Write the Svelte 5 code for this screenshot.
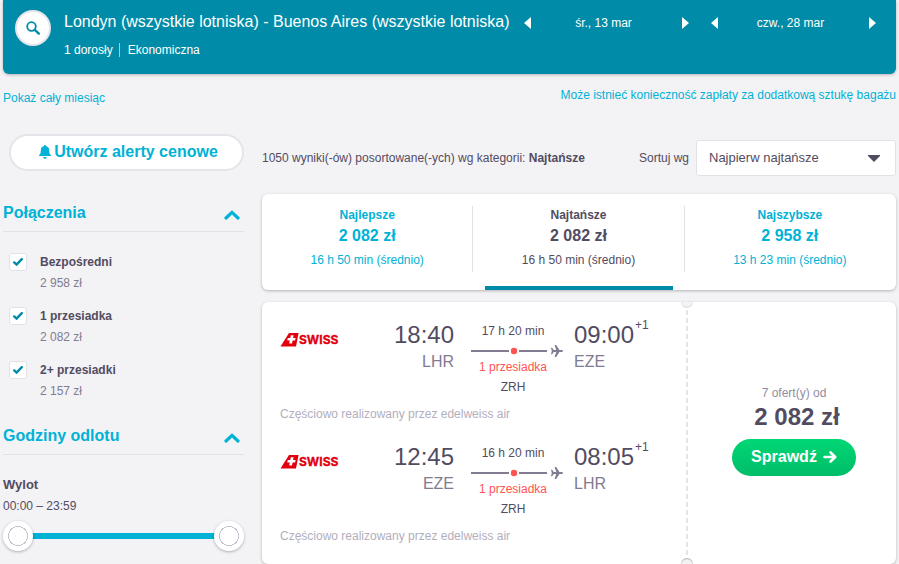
<script>
    const stops = $state([
        { id: "direct", label: "Bezpośredni", price: "2 958 zł", checked: true },
        { id: "one", label: "1 przesiadka", price: "2 082 zł", checked: true },
        { id: "more", label: "2+ przesiadki", price: "2 157 zł", checked: true },
    ]);

    const tabs = [
        { id: "best", label: "Najlepsze", price: "2 082 zł", time: "16 h 50 min (średnio)" },
        { id: "cheap", label: "Najtańsze", price: "2 082 zł", time: "16 h 50 min (średnio)" },
        { id: "fast", label: "Najszybsze", price: "2 958 zł", time: "13 h 23 min (średnio)" },
    ];
    let activeTab = $state("cheap");

    const dates = ["śr., 13 mar", "czw., 28 mar"];

    const legs = [
        { from: "LHR", to: "EZE", departs: "18:40", arrives: "09:00", duration: "17 h 20 min", via: "ZRH" },
        { from: "EZE", to: "LHR", departs: "12:45", arrives: "08:05", duration: "16 h 20 min", via: "ZRH" },
    ];

    // departure window, minutes after midnight
    const DAY = 1439;
    let start = $state(0);
    let end = $state(DAY);

    function clock(minutes) {
        const h = String(Math.floor(minutes / 60)).padStart(2, "0");
        const m = String(minutes % 60).padStart(2, "0");
        return `${h}:${m}`;
    }
</script>

{#snippet sectionTitle(text)}
    <h2 class="section-title">
        <button type="button">
            {text}
            <svg width="16" height="10" viewBox="0 0 16 10" aria-hidden="true">
                <path d="M2 8 L8 2.4 L14 8" fill="none" stroke="currentColor" stroke-width="3.2" stroke-linecap="round" />
            </svg>
        </button>
    </h2>
{/snippet}

<div class="page">
    <header class="search-bar">
        <button class="search-btn" type="button" aria-label="Szukaj">
            <svg width="14" height="14" viewBox="0 0 14 14" aria-hidden="true">
                <circle cx="5.5" cy="5.5" r="4.3" fill="none" stroke="currentColor" stroke-width="1.8" />
                <path d="M8.8 8.8 L12.8 12.6" stroke="currentColor" stroke-width="2.4" stroke-linecap="round" />
            </svg>
        </button>
        <div class="trip">
            <h1>Londyn (wszystkie lotniska) - Buenos Aires (wszystkie lotniska)</h1>
            <p><span>1 dorosły</span><span>Ekonomiczna</span></p>
        </div>
        <div class="dates">
            {#each dates as date}
                <div class="date">
                    <button type="button" aria-label="Poprzedni dzień">
                        <svg width="7" height="12" viewBox="0 0 7 12"><path d="M7 0 V12 L0 6 Z" fill="currentColor" /></svg>
                    </button>
                    <span>{date}</span>
                    <button type="button" aria-label="Następny dzień">
                        <svg width="7" height="12" viewBox="0 0 7 12"><path d="M0 0 V12 L7 6 Z" fill="currentColor" /></svg>
                    </button>
                </div>
            {/each}
        </div>
    </header>

    <div class="columns">
        <aside>
            <a class="month-link" href="#month">Pokaż cały miesiąc</a>
            <button class="alert-btn" type="button">
                <svg width="12" height="14" viewBox="0 0 12 14" aria-hidden="true">
                    <path
                        d="M6 0 C6.6 0 7 .4 7 1 C9.2 1.6 10.2 3.2 10.2 5.4 C10.2 8 10.7 9.4 12 10.3 V11 H0 V10.3 C1.3 9.4 1.8 8 1.8 5.4 C1.8 3.2 2.8 1.6 5 1 C5 .4 5.4 0 6 0 Z M4.2 12 H7.8 C7.6 13.2 6.9 13.8 6 13.8 S4.4 13.2 4.2 12 Z"
                        fill="currentColor"
                    />
                </svg>
                Utwórz alerty cenowe
            </button>

            {@render sectionTitle("Połączenia")}
            <div class="stops">
                {#each stops as stop (stop.id)}
                    <label class="stop">
                        <span class="box">
                            <input type="checkbox" bind:checked={stop.checked} />
                            {#if stop.checked}
                                <svg width="10" height="8" viewBox="0 0 10 8" aria-hidden="true">
                                    <path d="M1.2 4.4 L3.6 6.6 L8.8 1.2" fill="none" stroke="currentColor" stroke-width="2.4" stroke-linecap="round" />
                                </svg>
                            {/if}
                        </span>
                        <span class="stop-text">
                            <strong>{stop.label}</strong>
                            <span>{stop.price}</span>
                        </span>
                    </label>
                {/each}
            </div>

            {@render sectionTitle("Godziny odlotu")}
            <div class="hours">
                <h3>Wylot</h3>
                <p>{clock(start)} – {clock(end)}</p>
                <div class="slider">
                    <div class="rail">
                        <div
                            class="fill"
                            style="margin-left: {(start / DAY) * 100}%; width: {((end - start) / DAY) * 100}%"
                        ></div>
                    </div>
                    <input type="range" min="0" max={DAY} bind:value={start} aria-label="Wylot od" />
                    <input type="range" min="0" max={DAY} bind:value={end} aria-label="Wylot do" />
                </div>
            </div>
        </aside>

        <main>
            <a class="bag-note" href="#bags">Może istnieć konieczność zapłaty za dodatkową sztukę bagażu</a>

            <div class="sort-row">
                <p>1050 wyniki(-ów) posortowane(-ych) wg kategorii: <strong>Najtańsze</strong></p>
                <label for="sort">Sortuj wg</label>
                <div class="select">
                    <select id="sort">
                        <option>Najpierw najtańsze</option>
                        <option>Najpierw najlepsze</option>
                        <option>Najpierw najszybsze</option>
                    </select>
                    <svg width="12" height="7" viewBox="0 0 12 7" aria-hidden="true">
                        <path d="M0 0 H12 V1 L6 7 L0 1 Z" fill="currentColor" />
                    </svg>
                </div>
            </div>

            <div class="tabs card">
                {#each tabs as tab (tab.id)}
                    <button type="button" class:active={activeTab === tab.id} onclick={() => (activeTab = tab.id)}>
                        <span class="tab-body">
                            <strong>{tab.label}</strong>
                            <strong class="tab-price">{tab.price}</strong>
                            <span class="tab-time">{tab.time}</span>
                        </span>
                        <span class="tab-line"></span>
                    </button>
                {/each}
            </div>

            <article class="ticket card">
                <div class="legs">
                    {#each legs as leg}
                        <section class="leg">
                            <svg class="logo" width="58" height="16" viewBox="0 0 58 16" role="img" aria-label="SWISS">
                                <path d="M9 1 H18.6 L16 14.6 H0.5 Z" fill="#e2000f" />
                                <path d="M10.8 3.2 H13.6 L13.1 5.9 H15.6 L15.1 8.6 H12.6 L12 11.4 H9.2 L9.8 8.6 H7.2 L7.8 5.9 H10.3 Z" fill="#fff" />
                                <text x="19" y="12">SWISS</text>
                            </svg>
                            <div class="end depart">
                                <span class="time">{leg.departs}</span>
                                <span class="code">{leg.from}</span>
                            </div>
                            <div class="route">
                                <span>{leg.duration}</span>
                                <svg width="92" height="12" viewBox="0 0 92 12" aria-hidden="true">
                                    <path d="M0 6 H38 M48 6 H76" stroke="#817c91" stroke-width="2" />
                                    <circle cx="43" cy="6" r="3.2" fill="#ff5452" />
                                    <path
                                        d="M80 2.8 H81.1 L82.8 5.1 H85.2 L83.6 0 H85.2 L88.4 5.1 H90.6 C91.6 5.1 92 5.5 92 6 S91.6 6.9 90.6 6.9 H88.4 L85.2 12 H83.6 L85.2 6.9 H82.8 L81.1 9.2 H80 L80.8 6 Z"
                                        fill="#817c91"
                                    />
                                </svg>
                                <span class="changes">1 przesiadka</span>
                                <span>{leg.via}</span>
                            </div>
                            <div class="end">
                                <span class="time">{leg.arrives}<sup>+1</sup></span>
                                <span class="code">{leg.to}</span>
                            </div>
                            <p class="operated">Częściowo realizowany przez edelweiss air</p>
                        </section>
                    {/each}
                </div>
                <div class="tear"></div>
                <div class="offer">
                    <span class="count">7 ofert(y) od</span>
                    <strong>2 082 zł</strong>
                    <button type="button">
                        Sprawdź
                        <svg width="14" height="12" viewBox="0 0 14 12" aria-hidden="true">
                            <path d="M1.5 6 H12 M7.6 1.5 L12.2 6 L7.6 10.5" fill="none" stroke="currentColor" stroke-width="2.6" stroke-linecap="round" stroke-linejoin="round" />
                        </svg>
                    </button>
                </div>
            </article>
        </main>
    </div>
</div>

<style>
    :global(body) {
        background: #f3f2f5;
    }
    .page {
        padding: 0 3px;
        font-family: "Liberation Sans", Arial, sans-serif;
        font-size: 12px;
        line-height: 18px;
        color: #524c61;
        overflow: hidden;
    }
    .page :global(*) {
        box-sizing: border-box;
    }
    h1,
    h2,
    h3,
    p {
        margin: 0;
    }
    button {
        padding: 0;
        border: none;
        background: none;
        color: inherit;
        font: inherit;
        cursor: pointer;
    }
    a {
        color: #00b2d6;
        text-decoration: none;
    }
    svg {
        display: block;
        flex: none;
    }

    /* Search summary */
    .search-bar {
        display: flex;
        align-items: flex-start;
        padding: 10px 20px 14px 12px;
        min-height: 74px;
        border-radius: 0 0 6px 6px;
        background: #008ca8;
        box-shadow: 0 1px 3px rgba(37, 32, 31, 0.3);
        color: #fff;
    }
    .search-btn {
        display: flex;
        flex: none;
        align-items: center;
        justify-content: center;
        width: 36px;
        height: 36px;
        border: 2px solid #e6e4eb;
        border-radius: 50%;
        background: #fff;
        color: #008ca8;
    }
    .trip {
        flex: 1;
        padding: 1px 0 0 13px;
    }
    h1 {
        font-size: 16px;
        font-weight: 400;
        line-height: 22px;
    }
    .trip p {
        display: flex;
        align-items: center;
        margin-top: 8px;
    }
    .trip span + span {
        margin-left: 6px;
        padding-left: 8px;
        border-left: 1px solid rgba(255, 255, 255, 0.6);
        line-height: 14px;
    }
    .dates {
        display: flex;
        gap: 22px;
        padding-top: 4px;
    }
    .date {
        display: flex;
        align-items: center;
        justify-content: space-between;
        width: 165px;
    }
    .date span {
        padding-right: 6px;
    }

    .columns {
        display: grid;
        grid-template-columns: 241px 1fr;
        column-gap: 18px;
    }

    /* Filters */
    aside {
        padding-top: 15px;
    }
    .month-link {
        display: block;
    }
    .alert-btn {
        display: flex;
        align-items: center;
        justify-content: center;
        gap: 3px;
        width: 235px;
        height: 37px;
        margin: 27px 0 32px 6px;
        padding: 0 0 2px 4px;
        border: 2px solid #e6e4eb;
        border-radius: 19px;
        background: #fff;
        color: #00b2d6;
        font-size: 16px;
        font-weight: 700;
    }
    .section-title {
        border-bottom: 1px solid #e2e1e7;
        font-size: 16px;
        line-height: 20px;
        color: #00b2d6;
    }
    .section-title button {
        display: flex;
        align-items: center;
        justify-content: space-between;
        width: 100%;
        padding: 0 4px 8px 0;
    }
    .section-title svg {
        margin-top: 3px;
    }
    .stops {
        display: flex;
        flex-direction: column;
        gap: 15px;
        padding: 21px 0 26px 6px;
    }
    .stop {
        display: flex;
        gap: 13px;
    }
    .box {
        display: grid;
        place-items: center;
        width: 18px;
        height: 18px;
        color: #008ca8;
    }
    .box > :global(*) {
        grid-area: 1 / 1;
    }
    .box input {
        appearance: none;
        width: 18px;
        height: 18px;
        margin: 0;
        border: 1px solid #e2e1e7;
        border-radius: 3px;
        background: #fff;
    }
    .box svg {
        pointer-events: none;
    }
    .stop-text {
        display: flex;
        flex-direction: column;
        gap: 3px;
    }
    .stop-text span {
        color: #817c91;
    }
    .hours {
        padding-top: 21px;
    }
    .hours h3 {
        font-size: 13px;
    }
    .hours p {
        margin: 3px 0 6px;
    }
    .slider {
        display: grid;
        align-items: center;
        height: 30px;
    }
    .slider > * {
        grid-area: 1 / 1;
    }
    .rail {
        margin: 0 15px;
    }
    .fill {
        height: 6px;
        background: #00b2d6;
    }
    .slider input {
        appearance: none;
        width: 100%;
        height: 30px;
        margin: 0;
        background: none;
        pointer-events: none;
    }
    .slider input::-webkit-slider-thumb {
        appearance: none;
        width: 30px;
        height: 30px;
        border-radius: 50%;
        background: radial-gradient(circle, #fff 9px, #c6c3d0 9px, #c6c3d0 10px, #fff 10px);
        box-shadow: 0 1px 3px rgba(37, 32, 31, 0.35);
        pointer-events: auto;
    }

    /* Results */
    main {
        padding-top: 12px;
    }
    .bag-note {
        display: block;
        text-align: right;
    }
    .sort-row {
        display: flex;
        align-items: center;
        margin: 36px 0 18px;
    }
    .sort-row p {
        flex: 1;
    }
    .select {
        display: grid;
        align-items: center;
        width: 200px;
        margin-left: 7px;
    }
    .select > * {
        grid-area: 1 / 1;
    }
    .select svg {
        justify-self: end;
        margin-right: 16px;
        pointer-events: none;
    }
    select {
        appearance: none;
        width: 100%;
        height: 36px;
        padding: 0 36px 0 12px;
        border: 1px solid #e2e1e7;
        border-radius: 3px;
        background: #fff;
        color: inherit;
        font: inherit;
        font-size: 13px;
    }
    .card {
        border-radius: 6px;
        background: #fff;
        box-shadow: 0 1px 3px rgba(37, 32, 31, 0.3);
    }
    .tabs {
        display: grid;
        grid-template-columns: repeat(3, 1fr);
        padding-top: 12px;
    }
    .tabs button {
        color: #00b2d6;
    }
    .tabs .active {
        color: #524c61;
    }
    .tab-body {
        display: flex;
        flex-direction: column;
        height: 66px;
        border-right: 1px solid #e2e1e7;
    }
    .tabs button:last-child .tab-body {
        border-right-color: transparent;
    }
    .tab-price {
        font-size: 16px;
        line-height: 24px;
    }
    .tab-time {
        margin-top: 3px;
    }
    .tab-line {
        display: block;
        height: 4px;
        margin: 14px 12px 0;
    }
    .active .tab-line {
        background: #008ca8;
    }

    .ticket {
        display: flex;
        margin-top: 12px;
    }
    .legs {
        display: flex;
        flex: 1;
        flex-direction: column;
        gap: 20px;
        padding: 19px 18px;
    }
    .leg {
        display: grid;
        grid-template-columns: 58px 1fr 92px 105px;
        align-items: start;
    }
    .logo {
        margin-top: 11px;
        overflow: visible;
    }
    .logo text {
        fill: #e2000f;
        stroke: #e2000f;
        stroke-width: 0.3px;
        font-family: Inter, "Liberation Sans", sans-serif;
        font-size: 12px;
        font-weight: 700;
    }
    .end {
        display: flex;
        flex-direction: column;
        gap: 3px;
        padding-left: 11px;
    }
    .depart {
        padding: 0 17px 0 0;
        text-align: right;
    }
    .time {
        font-size: 24px;
        line-height: 28px;
    }
    sup {
        margin-left: 1px;
        font-size: 12px;
        line-height: 0;
        vertical-align: 14px;
    }
    .code {
        font-size: 16px;
        line-height: 20px;
        color: #817c91;
    }
    .route {
        display: flex;
        flex-direction: column;
        padding-top: 1px;
        text-align: center;
    }
    .route svg {
        margin: 5px 0 1px;
    }
    .route span {
        padding-right: 8px;
    }
    .route .changes {
        margin-bottom: 2px;
        color: #ff5452;
    }
    .operated {
        grid-column: 1 / -1;
        margin-top: 9px;
        color: #b2aebd;
    }
    .tear {
        position: relative;
        width: 2px;
        background: repeating-linear-gradient(#e6e4eb 0 5px, transparent 5px 8px);
    }
    .tear::before,
    .tear::after {
        content: "";
        position: absolute;
        left: -5px;
        width: 12px;
        height: 6px;
        background: #f3f2f5;
    }
    .tear::before {
        top: 0;
        border-radius: 0 0 6px 6px;
        box-shadow: inset 0 -1px 1px #dddbe2;
    }
    .tear::after {
        bottom: 0;
        border-radius: 6px 6px 0 0;
        box-shadow: inset 0 1px 1px #b5b3ba;
    }
    .offer {
        display: flex;
        flex-direction: column;
        align-items: center;
        width: 208px;
        padding: 82px 0 0 4px;
    }
    .count {
        color: #918d9f;
    }
    .offer strong {
        padding-left: 6px;
        font-size: 24px;
        line-height: 30px;
    }
    .offer button {
        display: flex;
        align-items: center;
        justify-content: center;
        gap: 6px;
        width: 124px;
        height: 37px;
        margin-top: 7px;
        padding-bottom: 2px;
        border-radius: 19px;
        background: linear-gradient(#00d775, #00bd68);
        color: #fff;
        font-size: 16px;
        font-weight: 700;
    }
</style>
